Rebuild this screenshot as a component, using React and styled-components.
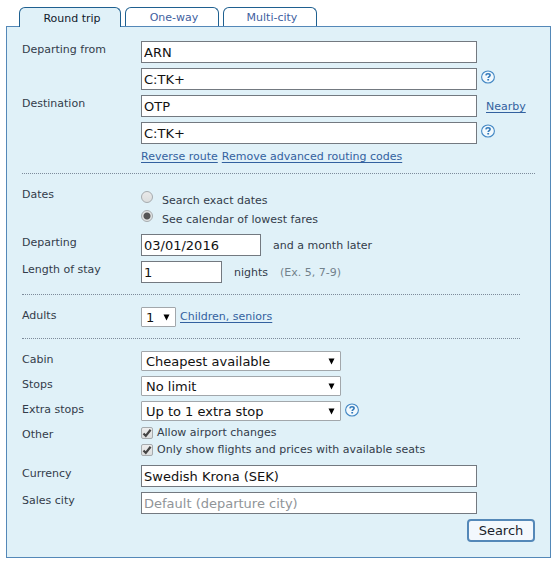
import React, { useState } from 'react';
import styled, { createGlobalStyle } from 'styled-components';

const GlobalStyle = createGlobalStyle`
  * {
    box-sizing: border-box;
  }

  body {
    margin: 0;
    background: #fff;
    color: #333c4a;
    font-family: Verdana, 'DejaVu Sans', sans-serif;
    font-size: 11px;
    line-height: 16px;
  }

  input, select, button {
    margin: 0;
    font-family: inherit;
  }
`;

const Page = styled.main`
  padding: 7px 5px 7px 6px;
`;

const TabList = styled.div`
  display: flex;
  gap: 4px;
  padding-left: 13px;
`;

const Tab = styled.button`
  position: relative;
  height: ${(props) => (props.$active ? '20px' : '19px')};
  margin-bottom: ${(props) => (props.$active ? '-1px' : '0')};
  min-width: ${(props) => (props.$active ? '102px' : '94px')};
  padding: 2px 18px 0 22px;
  border: 1px solid #1f6090;
  border-bottom: 0;
  border-radius: 6px 6px 0 0;
  background: ${(props) => (props.$active ? '#e0f1f8' : '#fff')};
  color: ${(props) => (props.$active ? '#111a2c' : '#3f5f9f')};
  font-size: 11px;
  line-height: 16px;
  cursor: pointer;
`;

const Panel = styled.form`
  padding: 14px 15px 15px;
  border: 1px solid #5488b8;
  background: #e0f1f8;
`;

const Section = styled.div`
  display: flex;
  flex-direction: column;
  gap: 5px;
`;

const Divider = styled.hr`
  margin: ${(props) => (props.$first ? '8px 0 12px' : '11px 15px 12px 0')};
  border: 0;
  border-top: 1px dotted #7d8b9b;
`;

const Row = styled.div`
  display: grid;
  grid-template-columns: 119px minmax(0, 1fr) ${(props) => (props.$side ? '58px' : '')};
`;

const Caption = styled.label`
  padding-top: 1px;
`;

const Fields = styled.div`
  display: flex;
  align-items: center;
`;

const RadioStack = styled.div`
  display: flex;
  flex-direction: column;
  padding: 2px 0 3px;
`;

const CheckStack = styled.div`
  display: flex;
  flex-direction: column;
  margin-top: -2px;
  padding-bottom: 2px;
`;

const TextInput = styled.input`
  width: ${(props) => props.$width || '100%'};
  height: 22px;
  padding: 1px 2px 0;
  border: 1px solid #737980;
  border-radius: 0;
  background: #fff;
  color: #111;
  font-size: 13px;

  &::placeholder {
    color: #909498;
    opacity: 1;
  }
`;

const SelectBox = styled.span`
  position: relative;
  display: block;
  width: ${(props) => props.$width};

  svg {
    position: absolute;
    top: 7px;
    right: 6px;
    pointer-events: none;
  }
`;

const StyledSelect = styled.select`
  display: block;
  width: 100%;
  height: 20px;
  padding: 1px 4px 0;
  border: 1px solid #a2a7ab;
  border-radius: 1px;
  appearance: none;
  background: #fff;
  color: #111;
  font-size: 13px;
`;

const Note = styled.span`
  padding: 2px 0 0 12px;
  color: ${(props) => (props.$muted ? '#73828c' : 'inherit')};
`;

const Link = styled.a`
  color: #33619f;
  text-decoration: underline;
  text-underline-offset: 2px;
`;

const LinkRow = styled.div`
  display: flex;
  gap: 4px;
  padding-left: 119px;
  white-space: nowrap;
`;

const Side = styled.div`
  align-self: flex-start;
  padding: ${(props) => (props.$link ? '4px 0 0 9px' : '2px 0 0 4px')};
`;

const HelpButton = styled.button`
  display: block;
  height: 14px;
  padding: 0;
  border: 0;
  background: none;
  cursor: pointer;

  svg {
    display: block;
  }
`;

const RadioLabel = styled.label`
  display: flex;
  height: 19px;
  padding-top: 3px;
  gap: 9px;

  span {
    padding-top: 2px;
  }
`;

const Radio = styled.input`
  width: 12px;
  height: 12px;
  border: 1px solid #a6abae;
  border-radius: 50%;
  appearance: none;
  background: ${(props) => (props.checked
    ? 'radial-gradient(circle, #555 0 3px, #e2e4e4 4px)'
    : 'linear-gradient(#e9e9e9, #dcdede)')};
`;

const CheckLabel = styled.label`
  display: flex;
  align-items: center;
  gap: 4px;
  height: 17px;
`;

const CheckBoxWrap = styled.span`
  position: relative;
  width: 12px;
  height: 12px;

  svg {
    position: absolute;
    top: 0;
    left: 0;
    pointer-events: none;
  }
`;

const CheckInput = styled.input`
  display: block;
  width: 12px;
  height: 12px;
  border: 1px solid #a6abae;
  border-radius: 2px;
  appearance: none;
  background: linear-gradient(#ededed, #dcdede);
`;

const Actions = styled.div`
  display: flex;
  justify-content: flex-end;
  padding-top: 5px;
`;

const SearchButton = styled.button`
  height: 23px;
  min-width: 68px;
  padding: 1px 8px 0;
  border: 2px solid #5488b8;
  border-radius: 4px;
  background: #f3f8fd;
  color: #1a1f2b;
  font-size: 13px;
  line-height: 18px;
  cursor: pointer;
`;

function Help({ label }) {
  return (
    <HelpButton type='button' aria-label={label}>
      <svg width='14' height='14' viewBox='0 0 14 14' fill='none'>
        <ellipse cx='7' cy='7' rx='6.4' ry='6' fill='#f2f9fd' stroke='#4488c4' strokeWidth='1.1' />
        <path d='M4.9 5.4C5 4.2 5.9 3.7 7 3.7c1.2 0 2.1.6 2.1 1.6C9.1 6.6 7.2 6.6 7.2 8.1' stroke='#3279ba' strokeWidth='1.6' />
        <path d='M6.3 9h1.8v1.500H6.300z' fill='#3279ba' />
      </svg>
    </HelpButton>
  );
}

function Select({ id, width, options }) {
  return (
    <SelectBox $width={width}>
      <StyledSelect id={id}>
        {options.map((option) => <option key={option}>{option}</option>)}
      </StyledSelect>
      <svg width='7' height='7' viewBox='0 0 7 7'>
        <path d='M0.5 0.5h6L3.5 6.500z' fill='#000' />
      </svg>
    </SelectBox>
  );
}

function Check({ label }) {
  const [checked, setChecked] = useState(true);

  return (
    <CheckLabel>
      <CheckBoxWrap>
        <CheckInput type='checkbox' checked={checked} onChange={() => setChecked(!checked)} />
        {checked && (
          <svg width='12' height='12' viewBox='0 0 12 12' fill='none'>
            <path d='M2.5 6.5L4.800 8.900L9.600 2.800' stroke='#444' strokeWidth='2.2' />
          </svg>
        )}
      </CheckBoxWrap>
      <span>{label}</span>
    </CheckLabel>
  );
}

const tabs = ['Round trip', 'One-way', 'Multi-city'];

function App() {
  const [tab, setTab] = useState(0);
  const [dates, setDates] = useState('calendar');

  return (
    <Page>
      <GlobalStyle />
      <TabList role='tablist'>
        {tabs.map((name, i) => (
          <Tab key={name} type='button' role='tab' aria-selected={tab === i} $active={tab === i} onClick={() => setTab(i)}>
            {name}
          </Tab>
        ))}
      </TabList>
      <Panel onSubmit={(e) => e.preventDefault()}>
        <Section>
          <Row $side>
            <Caption htmlFor='from'>Departing from</Caption>
            <TextInput id='from' defaultValue='ARN' />
          </Row>
          <Row $side>
            <span />
            <TextInput aria-label='Departure routing codes' defaultValue='C:TK+' />
            <Side><Help label='Departure routing help' /></Side>
          </Row>
          <Row $side>
            <Caption htmlFor='to'>Destination</Caption>
            <TextInput id='to' defaultValue='OTP' />
            <Side $link><Link href='#nearby'>Nearby</Link></Side>
          </Row>
          <Row $side>
            <span />
            <TextInput aria-label='Destination routing codes' defaultValue='C:TK+' />
            <Side><Help label='Destination routing help' /></Side>
          </Row>
          <LinkRow>
            <Link href='#reverse'>Reverse route</Link>
            <Link href='#remove'>Remove advanced routing codes</Link>
          </LinkRow>
        </Section>

        <Divider $first />

        <Section>
          <Row role='radiogroup' aria-labelledby='dates'>
            <Caption as='span' id='dates'>Dates</Caption>
            <RadioStack>
              <RadioLabel>
                <Radio type='radio' name='dates' checked={dates === 'exact'} onChange={() => setDates('exact')} />
                <span>Search exact dates</span>
              </RadioLabel>
              <RadioLabel>
                <Radio type='radio' name='dates' checked={dates === 'calendar'} onChange={() => setDates('calendar')} />
                <span>See calendar of lowest fares</span>
              </RadioLabel>
            </RadioStack>
          </Row>
          <Row>
            <Caption htmlFor='departing'>Departing</Caption>
            <Fields>
              <TextInput id='departing' $width='120px' defaultValue='03/01/2016' />
              <Note>and a month later</Note>
            </Fields>
          </Row>
          <Row>
            <Caption htmlFor='stay'>Length of stay</Caption>
            <Fields>
              <TextInput id='stay' $width='81px' defaultValue='1' />
              <Note>nights</Note>
              <Note $muted>(Ex. 5, 7-9)</Note>
            </Fields>
          </Row>
        </Section>

        <Divider />

        <Row>
          <Caption htmlFor='adults'>Adults</Caption>
          <Fields>
            <Select id='adults' width='35px' options={['1', '2', '3', '4', '5', '6']} />
            <Side><Link href='#passengers'>Children, seniors</Link></Side>
          </Fields>
        </Row>

        <Divider />

        <Section>
          <Row>
            <Caption htmlFor='cabin'>Cabin</Caption>
            <Select id='cabin' width='200px' options={['Cheapest available', 'Business class or higher', 'First class']} />
          </Row>
          <Row>
            <Caption htmlFor='stops'>Stops</Caption>
            <Select id='stops' width='200px' options={['No limit', 'Nonstop only', 'Up to 1 stop']} />
          </Row>
          <Row>
            <Caption htmlFor='extra'>Extra stops</Caption>
            <Fields>
              <Select id='extra' width='200px' options={['Up to 1 extra stop', 'No extra stops']} />
              <Side><Help label='Extra stops help' /></Side>
            </Fields>
          </Row>
          <Row role='group' aria-labelledby='other'>
            <Caption as='span' id='other'>Other</Caption>
            <CheckStack>
              <Check label='Allow airport changes' />
              <Check label='Only show flights and prices with available seats' />
            </CheckStack>
          </Row>
          <Row $side>
            <Caption htmlFor='currency'>Currency</Caption>
            <TextInput id='currency' defaultValue='Swedish Krona (SEK)' />
          </Row>
          <Row $side>
            <Caption htmlFor='city'>Sales city</Caption>
            <TextInput id='city' placeholder='Default (departure city)' />
          </Row>
        </Section>

        <Actions>
          <SearchButton type='submit'>Search</SearchButton>
        </Actions>
      </Panel>
    </Page>
  );
}

export default App;
